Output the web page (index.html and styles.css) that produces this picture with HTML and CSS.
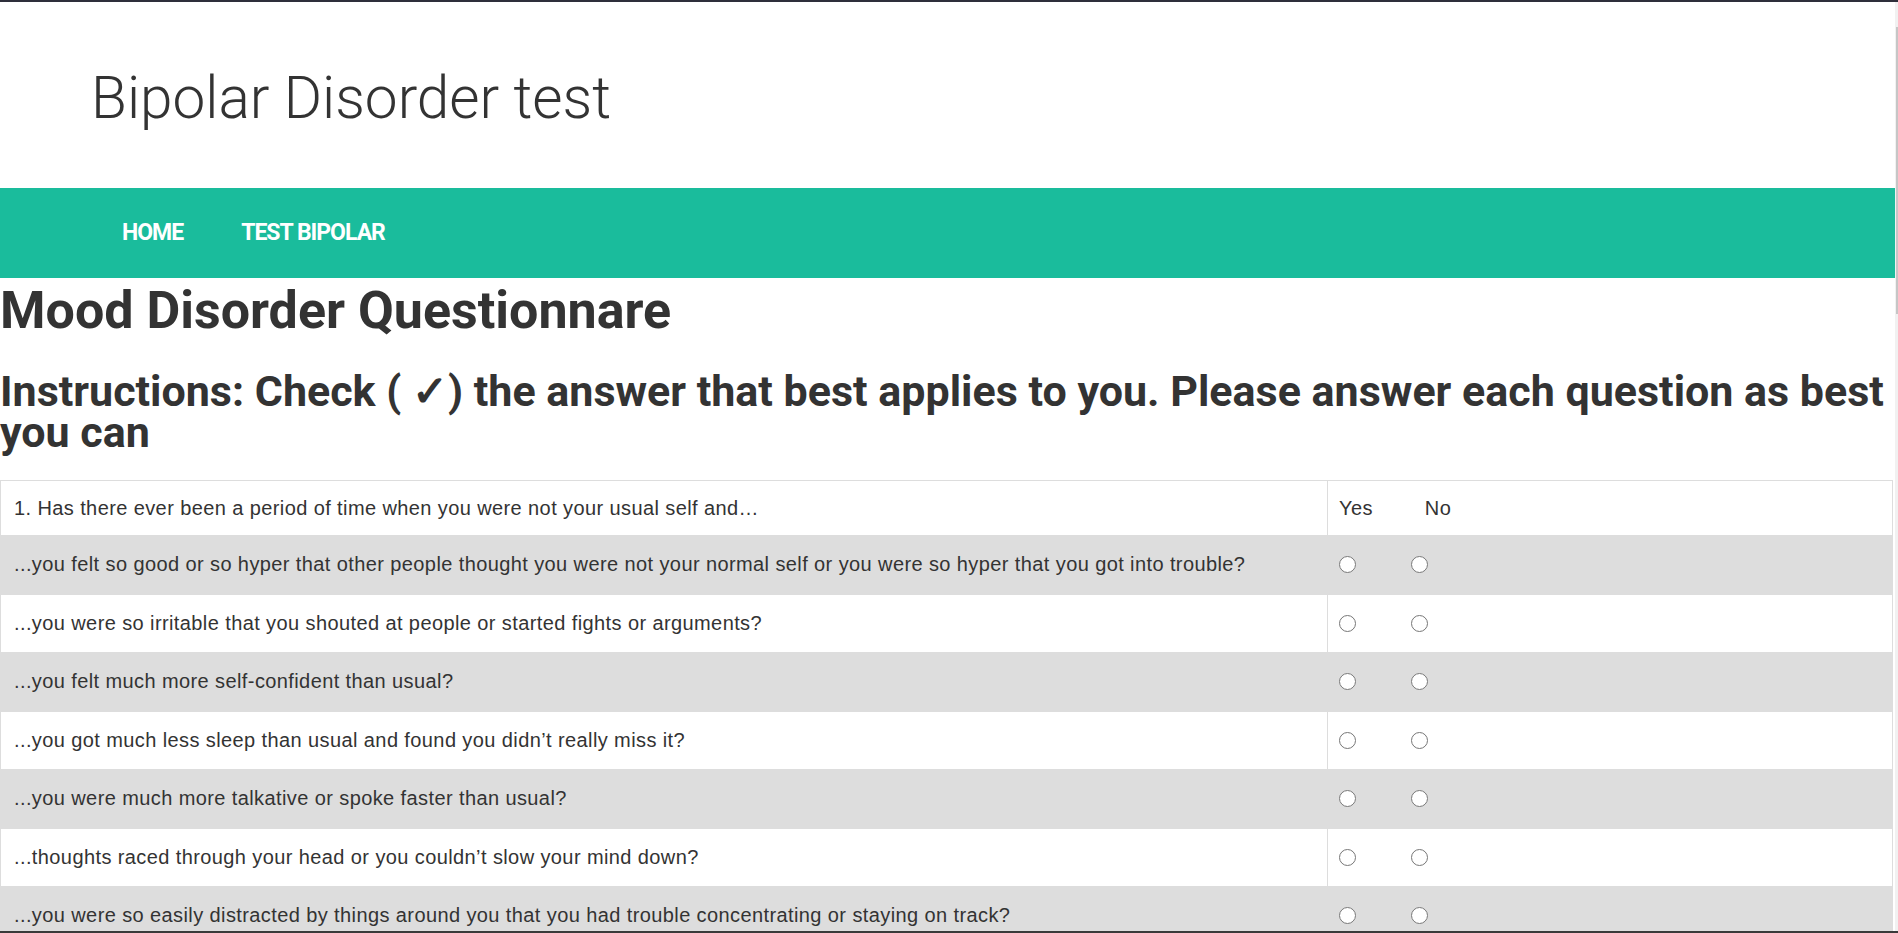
FILE: index.html
```html
<!DOCTYPE html>
<html lang="en">
<head>
<meta charset="utf-8">
<title>Bipolar Disorder test</title>
<link rel="stylesheet" href="styles.css">
</head>
<body>
<div class="frame-top"></div>
<div class="viewport">
  <div class="page">
    <header class="site-header">
      <div class="site-title">Bipolar Disorder test</div>
    </header>
    <nav class="main-nav">
      <a class="nav-link" href="#">HOME</a>
      <a class="nav-link" href="#">TEST BIPOLAR</a>
    </nav>
    <h1 class="page-title">Mood Disorder Questionnare</h1>
    <h2 class="instructions">Instructions: Check ( ✓) the answer that best applies to you. Please answer each question as best you can</h2>
    <table class="quiz">
      <colgroup><col class="col-q"><col class="col-a"></colgroup>
      <tr class="row-head">
        <td class="q">1. Has there ever been a period of time when you were not your usual self and…</td>
        <td class="a"><div class="answers head"><span>Yes</span><span>No</span></div></td>
      </tr>
      <tr class="row-alt">
        <td class="q">...you felt so good or so hyper that other people thought you were not your normal self or you were so hyper that you got into trouble?</td>
        <td class="a"><div class="answers"><input type="radio" name="q1"><input type="radio" name="q1"></div></td>
      </tr>
      <tr>
        <td class="q">...you were so irritable that you shouted at people or started fights or arguments?</td>
        <td class="a"><div class="answers"><input type="radio" name="q2"><input type="radio" name="q2"></div></td>
      </tr>
      <tr class="row-alt">
        <td class="q">...you felt much more self-confident than usual?</td>
        <td class="a"><div class="answers"><input type="radio" name="q3"><input type="radio" name="q3"></div></td>
      </tr>
      <tr>
        <td class="q">...you got much less sleep than usual and found you didn’t really miss it?</td>
        <td class="a"><div class="answers"><input type="radio" name="q4"><input type="radio" name="q4"></div></td>
      </tr>
      <tr class="row-alt">
        <td class="q">...you were much more talkative or spoke faster than usual?</td>
        <td class="a"><div class="answers"><input type="radio" name="q5"><input type="radio" name="q5"></div></td>
      </tr>
      <tr>
        <td class="q">...thoughts raced through your head or you couldn’t slow your mind down?</td>
        <td class="a"><div class="answers"><input type="radio" name="q6"><input type="radio" name="q6"></div></td>
      </tr>
      <tr class="row-alt">
        <td class="q">...you were so easily distracted by things around you that you had trouble concentrating or staying on track?</td>
        <td class="a"><div class="answers"><input type="radio" name="q7"><input type="radio" name="q7"></div></td>
      </tr>
      <tr>
        <td class="q">...you had much more energy than usual?</td>
        <td class="a"><div class="answers"><input type="radio" name="q8"><input type="radio" name="q8"></div></td>
      </tr>
      <tr class="row-alt">
        <td class="q">...you were much more active or did many more things than usual?</td>
        <td class="a"><div class="answers"><input type="radio" name="q9"><input type="radio" name="q9"></div></td>
      </tr>
    </table>
  </div>
  <div class="scrollbar"><div class="thumb"></div></div>
</div>
<div class="frame-bottom"></div>
</body>
</html>
```

FILE: styles.css
```css
html, body {
  margin: 0;
  padding: 0;
  height: 933px;
  overflow: hidden;
  background: #fff;
}

body {
  display: flex;
  flex-direction: column;
  font-family: "Liberation Sans", Arial, sans-serif;
  color: #333;
}

.frame-top {
  height: 2px;
  background: #2e2f3b;
  flex: none;
}

.frame-bottom {
  height: 2px;
  background: #3a3a3a;
  flex: none;
}

.viewport {
  flex: 1;
  display: flex;
  min-height: 0;
  overflow: hidden;
}

.page {
  width: 1895px;
  flex: none;
  overflow: hidden;
}

.scrollbar {
  width: 3px;
  flex: none;
  background: #f1f1f1;
  padding-top: 25px;
}

.thumb {
  width: 2px;
  margin-left: 1px;
  height: 287px;
  background: #c6c6c6;
}

.site-header {
  height: 186px;
  box-sizing: border-box;
  padding: 67px 0 0 91px;
}

.site-title {
  font-family: Roboto, "Liberation Sans", sans-serif;
  font-weight: 300;
  font-size: 58.5px;
  line-height: 58px;
  color: #333;
}

.main-nav {
  height: 90px;
  background: #1abc9c;
  display: flex;
  padding-left: 122px;
  gap: 58px;
}

.nav-link {
  font-family: Roboto, "Liberation Sans", sans-serif;
  font-weight: 700;
  font-size: 23px;
  letter-spacing: -1px;
  line-height: 90px;
  color: #fff;
  text-decoration: none;
}

.page-title {
  font-family: Roboto, "Liberation Sans", sans-serif;
  font-weight: 700;
  font-size: 52px;
  line-height: 56px;
  margin: 5px 0 0 0;
  color: #333;
}

.instructions {
  font-family: Roboto, "Liberation Sans", sans-serif;
  font-weight: 700;
  font-size: 43px;
  line-height: 41px;
  margin: 32px 0 0 0;
  color: #333;
}

.quiz {
  margin-top: 27px;
  width: 1893px;
  border-collapse: collapse;
  table-layout: fixed;
  border: 1px solid #ddd;
  font-size: 20px;
  letter-spacing: 0.4px;
}

.col-q {
  width: 1327px;
}

.quiz td {
  border: 1px solid #ddd;
  vertical-align: middle;
  padding: 0;
}

.quiz td.q {
  padding-left: 13px;
}

.quiz td.a {
  padding-left: 11px;
}

.quiz tr {
  height: 58.5px;
}

.quiz tr.row-head {
  height: 55px;
}

.quiz tr.row-alt {
  background: #ddd;
}

.answers {
  display: flex;
  align-items: center;
  gap: 55px;
}

.answers.head {
  gap: 52px;
}

.answers input {
  width: 17px;
  height: 17px;
  margin: 0;
}
```
